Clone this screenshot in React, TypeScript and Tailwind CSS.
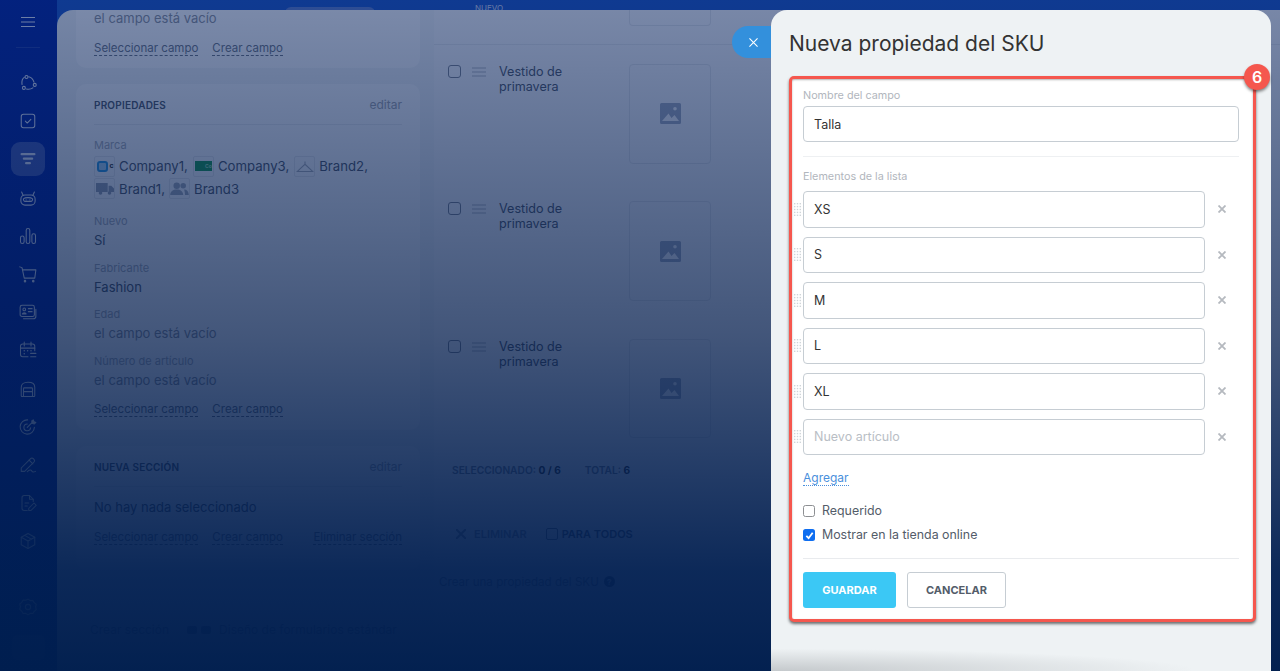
import type { ReactNode } from "react";

const sideIcons: ReactNode[] = [
  <>
    <circle cx="10" cy="4" r="2" />
    <circle cx="6.500" cy="18.500" r="2" />
    <circle cx="21" cy="14.500" r="2" />
    <path d="M7 4.500C4.500 6 3.500 9.500 4 14M10 20c3 .5 6 .3 8.500-1.500M13 3.800c3 .7 5.500 3 7 7" />
  </>,
  <>
    <rect x="3" y="3" width="18" height="18" rx="3" />
    <path d="M8.500 12.200l2.500 2.500 4.800-5" />
  </>,
  <path d="M3.500 5.500h17M6.500 11.500h11M9.500 17.500h5" strokeWidth={3} />,
  <>
    <rect x="2.500" y="8" width="19" height="13.500" rx="5.500" />
    <path d="M5.500 8.500L3.500 4M18.500 8.500l2-4.500M6 13c2-2 10-2 12 0 .5 2-1 3.500-2 3.500H8c-1 0-2.500-1.500-2-3.500z" />
    <path d="M9.500 14.500h.01M14.500 14.500h.01" />
  </>,
  <>
    <rect x="2" y="12" width="4.800" height="10" rx="2.400" />
    <rect x="9.600" y="2" width="4.800" height="20" rx="2.400" />
    <rect x="17.200" y="9" width="4.800" height="13" rx="2.400" />
  </>,
  <>
    <path d="M1 2.500l3 1 3 14h14l1.500-11H5" />
    <circle cx="8" cy="21.500" r="1" fill="currentColor" />
    <circle cx="19" cy="21.500" r="1" fill="currentColor" />
  </>,
  <>
    <rect x="1.500" y="3" width="19" height="15" rx="2.500" />
    <path d="M22.500 8.500v9c0 2-1.500 3.500-3.500 3.500H6" />
    <circle cx="7" cy="8.500" r="1.800" />
    <path d="M4.500 14.500c.5-2 4.500-2 5 0zM12.500 7.500h5M12.500 11.500h5" />
  </>,
  <>
    <path d="M12 21H5a3 3 0 01-3-3V7a3 3 0 013-3h13a3 3 0 013 3v6" />
    <path d="M7 1.500v5M16 1.500v5M2 9.500h19M15.500 16.500h7M15.500 21h7" />
    <path d="M7 13h.01M11.500 13h.01M16 13h.01M7 17h.01" strokeWidth={2} />
  </>,
  <>
    <path d="M3 21V9.500C3 6 6 3 12 3s9 3 9 6.500V21a1 1 0 01-1 1H4a1 1 0 01-1-1z" />
    <path d="M6 22V11.500a1 1 0 011-1h10a1 1 0 011 1V22M6 15.500h12" />
  </>,
  <>
    <path d="M20.500 12.500a9.500 9.500 0 11-9-10" />
    <path d="M15.500 13a4.500 4.500 0 11-4.500-5" />
    <path d="M11 12.500l6-6" />
    <path d="M19 2.500l1 2.500 2.500 1-2 2-3-1-.5-3z" fill="currentColor" />
  </>,
  <>
    <path d="M3 16L15.500 3.500a2.500 2.500 0 013.500 0l1 1a2.500 2.500 0 010 3.500L7.500 20.500H3z" />
    <path d="M13.500 5.500l5 5M11 21c3-3 5-3 6-1s3 1.500 5 .5" />
  </>,
  <>
    <path d="M11 22H7a3 3 0 01-3-3V5a3 3 0 013-3h7l5 5v3" />
    <path d="M14 2v5h5M8 12h5M8 16h3" />
    <path d="M13 22v-3l7-7 3 3-7 7z" />
  </>,
  <>
    <path d="M12 2l9 5v10l-9 5-9-5V7z" />
    <path d="M3 7l9 5 9-5M12 12v10M7.500 4.500l9 5" />
  </>,
  <path d="M6 12C8 11 16 11 18 12" />,
];

const SideIcon = ({ children }: { children: ReactNode }) => (
  <svg
    viewBox="0 0 24 24"
    fill="none"
    stroke="currentColor"
    strokeWidth={1.4}
    strokeLinecap="round"
    strokeLinejoin="round"
    className="h-[18px] w-[18px]"
  >
    {children}
  </svg>
);

const Sidebar = () => (
  <div className="flex h-full w-[57px] shrink-0 flex-col items-center bg-[#0627a2] pr-px text-[#dfe6f8]">
    <div className="flex h-[44px] items-center">
      <svg viewBox="0 0 14 12" className="h-[12px] w-[14px]" stroke="currentColor" fill="none" strokeWidth={1}>
        <path d="M0 1.500h14M0 6h14M0 10.500h14" />
      </svg>
    </div>
    <div className="mt-[3px] h-px w-[24px] bg-[#ffffff20]" />
    <div className="mt-[16px] h-[510px] w-full overflow-hidden">
      {sideIcons.map((icon, i) => (
        <div key={i} className="flex h-[38.2px] items-center justify-center">
          <div
            className={`flex h-[34px] w-[34px] items-center justify-center rounded-[9px] ${
              i === 2 ? "bg-[#ffffff40]" : ""
            }`}
          >
            <SideIcon>{icon}</SideIcon>
          </div>
        </div>
      ))}
    </div>
    <div className="mt-[24px]">
      <SideIcon>
        <circle cx="12" cy="12" r="3.500" />
        <path d="M12 1.500l3 2 3.500-.3 1.800 3 2.700 2.300-.8 3.500.8 3.500-2.700 2.300-1.800 3-3.500-.3-3 2-3-2-3.500.3-1.800-3L1 15l.8-3.500L1 8l2.700-2.300 1.800-3L9 3z" />
      </SideIcon>
    </div>
    <div className="mt-[19px] h-[25px] w-[33px] rounded-[6px] bg-[#ffffff30]" />
  </div>
);

const DashLink = ({ children, className = "" }: { children: ReactNode; className?: string }) => (
  <span className={`border-b border-dashed border-[#6f7885] text-[11.500px] leading-[14px] text-[#6f7885] ${className}`}>
    {children}
  </span>
);

const Fld = ({ label, value, muted, top }: { label: string; value: string; muted?: boolean; top: string }) => (
  <div className={top}>
    <div className="text-[11px] leading-[14px] text-[#a8aeb6]">{label}</div>
    <div className={`mt-[2px] text-[13px] leading-[20px] ${muted ? "text-[#8d939c]" : "text-[#535c69]"}`}>{value}</div>
  </div>
);

const Tag = ({ children }: { children: ReactNode }) => (
  <span className="mr-[4px] inline-flex h-[21px] w-[21px] items-center justify-center overflow-hidden rounded-[2px] border border-[#e4e7ea] align-middle">
    {children}
  </span>
);

const Brands = () => (
  <div className="mt-[3px] w-[300px] text-[13.200px] leading-[22.5px] text-[#535c69]">
    <div className="flex h-[22.5px] items-center whitespace-nowrap">
      <Tag>
        <span className="ml-[2px] h-[11px] w-[11px] shrink-0 rounded-[3px] border-2 border-[#2f9ae0] bg-[#a9d4f2]" />
        <span className="ml-px text-[7px] font-bold text-[#333]">c</span>
      </Tag>
      <span>Company1,</span>
      <span className="ml-[5px]" />
      <Tag>
        <span className="flex h-[10px] w-[17px] shrink-0 items-center justify-end bg-[#1f9d55] text-[5px] font-bold text-[#9fe0b8]">Co</span>
      </Tag>
      <span>Company3,</span>
      <span className="ml-[5px]" />
      <Tag>
        <svg viewBox="0 0 20 14" className="h-[13px] w-[18px]" fill="none" stroke="#aab0b8" strokeWidth={1.2}>
          <path d="M10 1.500v3L1.500 12.500h17L10 4.500" />
        </svg>
      </Tag>
      <span>Brand2,</span>
    </div>
    <div className="flex h-[22.5px] items-center whitespace-nowrap">
      <Tag>
        <svg viewBox="0 0 20 14" className="h-[13px] w-[18px]" fill="#9aa4b2">
          <path d="M0 1h13v10H0zM14 4h3l3 3v4h-6z" />
          <circle cx="5" cy="12" r="2" />
          <circle cx="15" cy="12" r="2" />
        </svg>
      </Tag>
      <span>Brand1,</span>
      <span className="ml-[4px]" />
      <Tag>
        <svg viewBox="0 0 20 14" className="h-[13px] w-[19px]" fill="#a4adb9">
          <circle cx="7" cy="4" r="3.500" />
          <circle cx="14" cy="4" r="3" />
          <path d="M0 14c0-4 3-6 7-6s7 2 7 6zM15 8c3 0 5 2 5 6h-4c0-2-.5-4-1-6z" />
        </svg>
      </Tag>
      <span>Brand3</span>
    </div>
  </div>
);

const CardHead = ({ title }: { title: string }) => (
  <div className="flex h-[41px] items-end justify-between border-b border-[#e6e9ec] pb-[12px]">
    <span className="text-[10px] font-semibold leading-[14px] tracking-[0.2px] text-[#525c69]">{title}</span>
    <span className="text-[12px] leading-[14px] text-[#a0a6ae]">editar</span>
  </div>
);

const LeftColumn = () => (
  <div className="flex w-[344px] shrink-0 flex-col">
    <div className="h-[58px] rounded-b-[10px] bg-[#f8fafb] px-[18px]">
      <div className="-mt-[2px] text-[13px] leading-[20px] text-[#8d939c]">el campo está vacío</div>
      <div className="mt-[13px] flex gap-[14px]">
        <DashLink>Seleccionar campo</DashLink>
        <DashLink>Crear campo</DashLink>
      </div>
    </div>
    <div className="mt-[16px] h-[346px] rounded-[10px] bg-[#f8fafb] px-[18px]">
      <CardHead title="PROPIEDADES" />
      <div className="mt-[13px] text-[11px] leading-[14px] text-[#a8aeb6]">Marca</div>
      <Brands />
      <Fld top="mt-[14px]" label="Nuevo" value="Sí" />
      <Fld top="mt-[10.500px]" label="Fabricante" value="Fashion" />
      <Fld top="mt-[10.500px]" label="Edad" value="el campo está vacío" muted />
      <Fld top="mt-[10.500px]" label="Número de artículo" value="el campo está vacío" muted />
      <div className="mt-[12px] flex gap-[14px]">
        <DashLink>Seleccionar campo</DashLink>
        <DashLink>Crear campo</DashLink>
      </div>
    </div>
    <div className="mt-[16px] h-[124px] rounded-[10px] bg-[#f8fafb] px-[18px]">
      <CardHead title="NUEVA SECCIÓN" />
      <div className="mt-[10px] text-[13px] leading-[20px] text-[#535c69]">No hay nada seleccionado</div>
      <div className="mt-[13px] flex gap-[14px]">
        <DashLink>Seleccionar campo</DashLink>
        <DashLink>Crear campo</DashLink>
        <DashLink className="ml-auto">Eliminar sección</DashLink>
      </div>
    </div>
    <div className="mt-[53px] flex items-center pl-[14px] text-[12px] leading-[14px] text-[#6f7885]">
      <span>Crear sección</span>
      <svg viewBox="0 0 24 10" className="ml-[18px] mr-[8px] h-[10px] w-[24px]" fill="#6f7885">
        <rect x="0" y="1" width="10" height="8" rx="2" />
        <rect x="14" y="1" width="10" height="8" rx="2" />
      </svg>
      <span>Diseño de formularios estándar</span>
    </div>
  </div>
);

const ImgIcon = () => (
  <svg viewBox="0 0 21 21" className="h-[21px] w-[21px]">
    <path
      fillRule="evenodd"
      fill="#a3aec0"
      d="M1.500 0h18A1.500 1.500 0 0121 1.500v18a1.500 1.500 0 01-1.500 1.500h-18A1.500 1.500 0 010 19.500v-18A1.500 1.500 0 011.500 0zM15 4a1.800 1.800 0 100 3.600A1.800 1.800 0 0015 4zM2 18h17l-4.500-6-3 3-3-4.500z"
    />
  </svg>
);

const SkuRow = () => (
  <div className="flex h-[137.300px] pl-[14px] pt-[19px]">
    <div className="mt-px h-[13px] w-[13px] shrink-0 rounded-[3px] border border-[#7f8792]" />
    <svg viewBox="0 0 14 10" className="ml-[11px] mt-[3px] h-[10px] w-[14px] shrink-0" stroke="#b0b6be" strokeWidth={1}>
      <path d="M0 1h14M0 5h14M0 9h14" />
    </svg>
    <div className="ml-[13px] w-[130px] shrink-0 text-[12.600px] leading-[15px] text-[#535c69]">
      Vestido de
      <br />
      primavera
    </div>
    <div className="flex h-[99.500px] w-[82px] shrink-0 items-center justify-center rounded-[4px] border border-[#dfe3e7]">
      <ImgIcon />
    </div>
  </div>
);

const RightColumn = () => (
  <div className="min-w-0 flex-1 bg-[#f4f6f8]">
    <div className="h-[35px] border-b border-[#e3e6ea] pl-[195px]">
      <div className="h-[16px] w-[82px] rounded-b-[4px] border border-t-0 border-[#dfe3e7]" />
    </div>
    <SkuRow />
    <SkuRow />
    <SkuRow />
    <div className="mt-[6px] flex pl-[18px] text-[10.200px] font-semibold leading-[14px] text-[#7a828d]">
      <span>
        SELECCIONADO: <span className="font-bold text-[#333]">0 / 6</span>
      </span>
      <span className="ml-[24px]">
        TOTAL: <span className="font-bold text-[#333]">6</span>
      </span>
    </div>
    <div className="mt-[50px] flex items-center pl-[22px] text-[11px] font-semibold leading-[14px] text-[#8a919b]">
      <svg viewBox="0 0 10 10" className="h-[10px] w-[10px]" stroke="#8a919b" strokeWidth={2}>
        <path d="M0 0l10 10M10 0L0 10" />
      </svg>
      <span className="ml-[8px]">ELIMINAR</span>
      <span className="ml-[19px] h-[12px] w-[12px] rounded-[2px] border border-[#6f7885]" />
      <span className="ml-[4px] text-[#535c69]">PARA TODOS</span>
    </div>
    <div className="mt-[33px] flex items-center pl-[5px] text-[11.600px] leading-[16px] text-[#7a828d]">
      Crear una propiedad del SKU
      <span className="ml-[5px] flex h-[11px] w-[11px] items-center justify-center rounded-full bg-[#535c69] text-[8px] font-bold leading-none text-[#eef2f4]">
        ?
      </span>
    </div>
  </div>
);

const DragDots = () => (
  <svg viewBox="0 0 7 13" className="h-[13px] w-[7px]" fill="#d0d5d9">
    {[0, 2.800, 5.600].map((x) =>
      [0, 2.900, 5.800, 8.700, 11.600].map((y) => <rect key={`${x}-${y}`} x={x} y={y} width="1.400" height="1.400" />)
    )}
  </svg>
);

const inputClass =
  "h-full w-full rounded-[4px] border border-[#c6cdd3] bg-white px-[10px] text-[12.500px] text-[#333] outline-none placeholder:text-[#b9bec5]";

const ListRow = ({ value, placeholder }: { value?: string; placeholder?: string }) => (
  <div className="mb-[9px] flex h-[36.500px] items-center">
    <div className="flex w-[11px] shrink-0 justify-start pl-[2px]">
      <DragDots />
    </div>
    <div className="h-full w-[402px] shrink-0">
      <input readOnly value={value ?? ""} placeholder={placeholder} className={inputClass} />
    </div>
    <svg viewBox="0 0 8 8" className="ml-[13px] h-[8px] w-[8px]" stroke="#b5b9bf" strokeWidth={1.800}>
      <path d="M.5.5l7 7M7.500.5l-7 7" />
    </svg>
  </div>
);

const Check = ({ on, label }: { on?: boolean; label: string }) => (
  <div className="flex h-[24px] items-center">
    <span
      className={`flex h-[12px] w-[12px] items-center justify-center rounded-[2.500px] ${
        on ? "bg-[#0f6ef0]" : "border border-[#8d8f92] bg-white"
      }`}
    >
      {on && (
        <svg viewBox="0 0 10 10" className="h-[9px] w-[9px]" fill="none" stroke="#fff" strokeWidth={2}>
          <path d="M1.500 5.500l2.500 2.500 4.500-6" />
        </svg>
      )}
    </span>
    <span className="ml-[7px] text-[12.400px] leading-[16px] text-[#535c69]">{label}</span>
  </div>
);

const Slider = () => (
  <div className="absolute bottom-0 left-[771px] top-[10px] z-10 w-[500px] rounded-t-[16px] bg-[#eef2f4] pl-[18px] pr-[15px]">
    <div className="absolute left-[-39px] top-[16px] flex h-[32px] w-[39px] items-center justify-center rounded-l-full bg-[#3390dc] pl-[4px]">
      <svg viewBox="0 0 10 10" className="h-[9px] w-[9px]" stroke="#fff" strokeWidth={1.200}>
        <path d="M.5.5l9 9M9.500.5l-9 9" />
      </svg>
    </div>
    <h1 className="h-[66px] pt-[19px] text-[21px] font-normal leading-[30px] text-[#333]">Nueva propiedad del SKU</h1>
    <div className="relative h-[546px] rounded-[5px] border-[3px] border-[#f5574e] bg-white pl-[11px] pr-[14px] pt-[9px] shadow-[0_2px_3px_rgba(0,0,0,0.55),inset_0_1px_2px_rgba(0,0,0,0.3)]">
      <div className="absolute -right-[17px] -top-[15px] flex h-[26px] w-[26px] items-center justify-center rounded-full bg-[#f5574e] text-[16px] font-semibold leading-none text-white shadow-[0_2px_3px_rgba(0,0,0,0.45)]">
        6
      </div>
      <div className="text-[10.800px] leading-[16px] text-[#b1b6bd]">Nombre del campo</div>
      <div className="mt-[2px] h-[36px]">
        <input readOnly value="Talla" className={inputClass} />
      </div>
      <div className="mt-[14px] h-px bg-[#eef0f2]" />
      <div className="mt-[12px] text-[10.800px] leading-[16px] text-[#b1b6bd]">Elementos de la lista</div>
      <div className="-ml-[11px] mt-[6px]">
        <ListRow value="XS" />
        <ListRow value="S" />
        <ListRow value="M" />
        <ListRow value="L" />
        <ListRow value="XL" />
        <ListRow placeholder="Nuevo artículo" />
      </div>
      <div className="mt-[15px] flex">
        <span className="border-b border-dotted border-[#4a8fdc] text-[12px] leading-[15px] text-[#4a8fdc]">Agregar</span>
      </div>
      <div className="mt-[13px]">
        <Check label="Requerido" />
        <Check on label="Mostrar en la tienda online" />
      </div>
      <div className="mt-[11px] h-px bg-[#e9ebee]" />
      <div className="mt-[13px] flex gap-[11px]">
        <button className="h-[36px] w-[93px] rounded-[3px] bg-[#3bc8f5] text-[11px] font-bold text-white">GUARDAR</button>
        <button className="h-[36px] w-[99px] rounded-[3px] border border-[#c6cdd3] text-[11px] font-bold text-[#535c69]">CANCELAR</button>
      </div>
    </div>
    <div className="absolute bottom-0 left-0 h-[22px] w-[420px] bg-[radial-gradient(ellipse_at_bottom_left,rgba(120,125,130,0.35),rgba(120,125,130,0)_72%)]" />
  </div>
);

const App = () => (
  <div className="relative h-[671px] w-[1280px] overflow-hidden bg-[#1e58c8] font-['Inter','Liberation_Sans',sans-serif]">
    <div className="flex h-full">
      <Sidebar />
      <div className="flex min-w-0 flex-1 flex-col">
        <div className="relative h-[10px] shrink-0 overflow-hidden">
          <div className="ml-[228px] mt-[7px] h-[10px] w-[90px] rounded-t-[6px] bg-[#5d7fcf]" />
          <span className="absolute left-[418px] top-[4px] text-[8px] leading-[8px] text-[#cfd9f0]">NUEVO</span>
        </div>
        <div className="flex flex-1 gap-[14px] overflow-hidden rounded-tl-[16px] bg-[#eef2f4] pl-[19px]">
          <LeftColumn />
          <RightColumn />
        </div>
      </div>
    </div>
    <div className="absolute inset-0 bg-[linear-gradient(to_bottom,rgba(0,28,90,0.5)_0%,rgba(0,26,75,0.73)_50%,rgba(0,30,80,0.95)_85%,rgba(0,30,78,0.99)_100%)]" />
    <Slider />
  </div>
);

export default App;
